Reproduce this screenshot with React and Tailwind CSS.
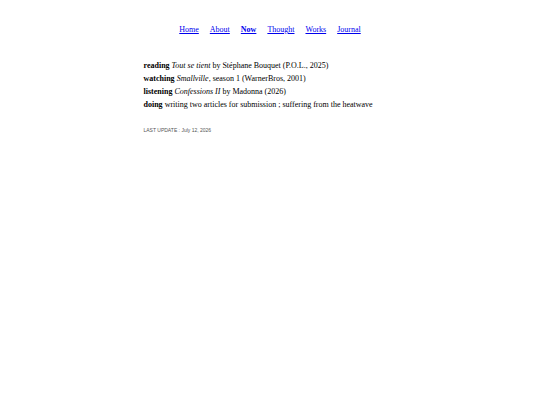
import React from 'react';

const links = [
  { label: 'Home', href: '#home' },
  { label: 'About', href: '#about' },
  { label: 'Now', href: '#now', current: true },
  { label: 'Thought', href: '#thought' },
  { label: 'Works', href: '#works' },
  { label: 'Journal', href: '#journal' }
];

/**
 * Site navigation
 */
const Nav = () => {
  return (
    <nav className="flex justify-center gap-[11px] pt-[23px]">
      {links.map(link => (
        <a
          key={link.label}
          href={link.href}
          aria-current={link.current ? 'page' : undefined}
          className={`text-[#0000ee] underline ${link.current ? 'font-bold' : ''}`}
        >
          {link.label}
        </a>
      ))}
    </nav>
  );
};

const App = () => {
  return (
    <div className="min-h-screen bg-white text-black font-['Liberation_Serif',serif] text-[8px] leading-[13px]">
      <Nav />
      <main className="mx-auto w-full max-w-[253px] pt-[23px]">
        <p><strong>reading</strong> <em>Tout se tient</em> by Stéphane Bouquet (P.O.L., 2025)</p>
        <p><strong>watching</strong> <em>Smallville</em>, season 1 (WarnerBros, 2001)</p>
        <p><strong>listening</strong> <em>Confessions II</em> by Madonna (2026)</p>
        <p><strong>doing</strong> writing two articles for submission ; suffering from the heatwave</p>
        <p className="pt-[13px] font-['Liberation_Sans',sans-serif] text-[5px] text-[#555]">
          LAST UPDATE : July 12, 2026
        </p>
      </main>
    </div>
  );
};

export default App;
